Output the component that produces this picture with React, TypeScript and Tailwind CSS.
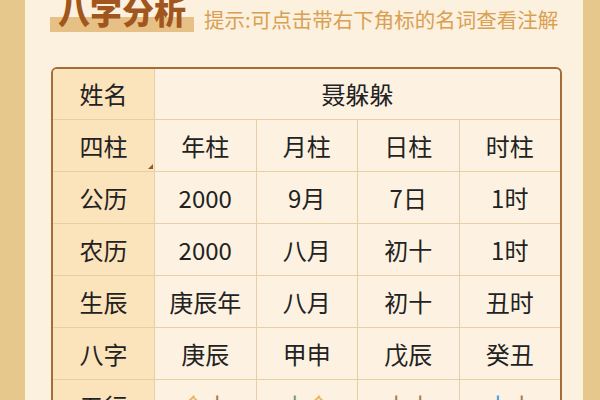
import React from "react";

const font = { fontFamily: '"Noto Sans CJK SC", "Noto Sans", sans-serif' };

type Seg = { t: string; c: string };

const rows: { label: string; cells: (string | Seg[])[]; tri?: boolean }[] = [
  { label: "四柱", cells: ["年柱", "月柱", "日柱", "时柱"], tri: true },
  { label: "公历", cells: ["2000", "9月", "7日", "1时"] },
  { label: "农历", cells: ["2000", "八月", "初十", "1时"] },
  { label: "生辰", cells: ["庚辰年", "八月", "初十", "丑时"] },
  { label: "八字", cells: ["庚辰", "甲申", "戊辰", "癸丑"] },
  {
    label: "五行",
    cells: [
      [
        { t: "金", c: "#e9b55b" },
        { t: "土", c: "#a77a4a" },
      ],
      [
        { t: "木", c: "#6f9a68" },
        { t: "金", c: "#e9b55b" },
      ],
      [
        { t: "土", c: "#a77a4a" },
        { t: "土", c: "#a77a4a" },
      ],
      [
        { t: "水", c: "#3f9fdc" },
        { t: "土", c: "#a77a4a" },
      ],
    ],
  },
];

export default function App() {
  return (
    <div
      className="w-[600px] h-[400px] overflow-hidden bg-[#e6c78c] flex items-start pl-[25px] pr-[17px]"
      style={font}
    >
      <div className="flex-1 bg-[#fcf0de] flex flex-col min-h-[400px]">
        <div className="h-[67px] flex items-start pl-[25px] shrink-0">
          <div className="relative mt-[-6px] px-[8px]">
            <div className="absolute left-0 right-0 top-[23px] h-[15px] bg-[#e6c084]" />
            <span className="relative block text-[32px] leading-[32px] font-black text-[#a0561c]">
              八字分析
            </span>
          </div>
          <span className="ml-[10px] mt-[9px] text-[20.5px] leading-[20px] text-[#d9a052]">
            提示:可点击带右下角标的名词查看注解
          </span>
        </div>
        <div className="shrink-0 ml-[26px] mr-[21px] rounded-[6px] border-2 border-[#a56d35] overflow-hidden bg-[#fdf2e1]">
          <div className="grid grid-cols-[101px_repeat(4,minmax(0,1fr))] text-[24px] text-[#222]">
            <div className="h-[51px] bg-[#fbe3bc] border-b border-[#e6cfa4] flex items-center justify-center">
              姓名
            </div>
            <div className="col-span-4 h-[51px] border-b border-l border-[#e6cfa4] flex items-center justify-center">
              聂躲躲
            </div>
            {rows.map((r) => (
              <React.Fragment key={r.label}>
                <div className="relative h-[52px] bg-[#fbe3bc] border-b border-[#e6cfa4] flex items-center justify-center">
                  {r.label}
                  {r.tri && (
                    <svg
                      className="absolute right-[1px] bottom-[2px]"
                      width="5"
                      height="5"
                      viewBox="0 0 5 5"
                    >
                      <polygon points="5,0 5,5 0,5" fill="#8a5a2a" />
                    </svg>
                  )}
                </div>
                {r.cells.map((c, i) => (
                  <div
                    key={i}
                    className="h-[52px] border-b border-l border-[#e6cfa4] flex items-center justify-center"
                  >
                    {typeof c === "string"
                      ? c
                      : c.map((s, j) => (
                          <span key={j} style={{ color: s.c }}>
                            {s.t}
                          </span>
                        ))}
                  </div>
                ))}
              </React.Fragment>
            ))}
          </div>
        </div>
      </div>
    </div>
  );
}
